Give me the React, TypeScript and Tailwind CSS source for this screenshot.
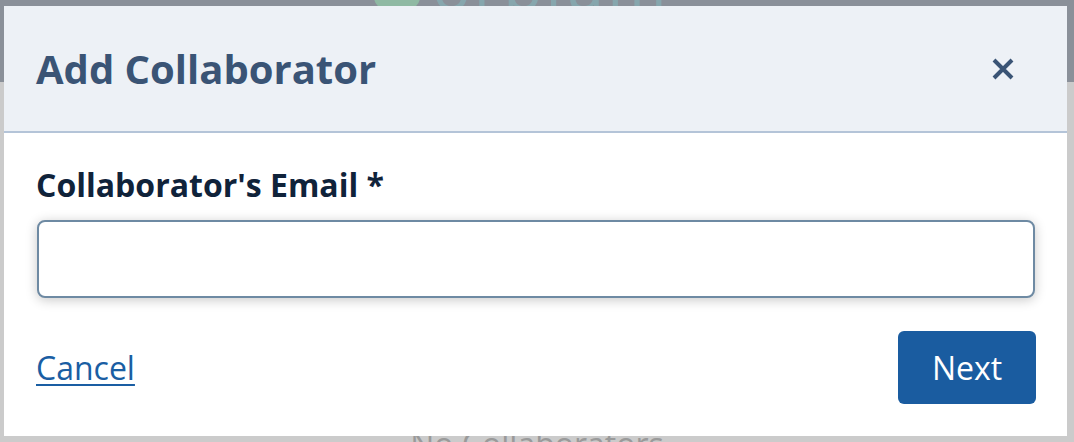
export default function App() {
  return (
    <div className="relative w-[1074px] h-[442px] overflow-hidden bg-[#cbcbcb] font-['Open_Sans',sans-serif]">
      {/* page behind the overlay */}
      <div className="h-[82px] bg-[#8a9099] flex justify-center items-start">
        <div className="flex items-center gap-3 -mt-[46px] ml-[-30px]">
          <div className="w-[46px] h-[46px] rounded-xl bg-[#8fb9a3]" />
          <span className="text-[64px] leading-none text-[#86a6ad] tracking-wider">orbium</span>
        </div>
      </div>
      <div className="absolute left-0 right-0 top-[428px] text-center text-[32px] leading-none text-[#9a9a9a]">
        No Collaborators
      </div>

      {/* modal */}
      <div className="absolute left-[4px] top-[6px] w-[1063px] h-[430px] bg-white flex flex-col">
        <div className="h-[127px] shrink-0 bg-[#edf1f6] border-b-2 border-[#b4c4d8] pl-8 pr-[53px] flex items-center justify-between">
          <h2 className="text-[40px] font-bold text-[#3a5475] leading-none">Add Collaborator</h2>
          <button className="w-[22px] h-[22px] flex items-center justify-center">
            <svg width="22" height="22" viewBox="0 0 22 22">
              <path d="M2 2 20 20M20 2 2 20" stroke="#3a5475" strokeWidth="4" strokeLinecap="butt" />
            </svg>
          </button>
        </div>

        <div className="flex-1 flex flex-col pl-8 pr-[31px] pt-[30px] pb-8">
          <label className="text-[32px] font-bold leading-[44px] text-[#10233a] mb-[13px]">
            Collaborator's Email *
          </label>
          <input
            type="email"
            className="h-[78px] w-[998px] ml-px rounded-lg border-2 border-[#6e8aa3] bg-white shadow-[0_2px_12px_rgba(0,0,0,0.22)] outline-none px-4 text-[28px]"
          />
          <div className="mt-auto flex items-center justify-between">
            <a href="#" className="text-[32px] leading-none text-[#1a5ea3] underline underline-offset-[4px] decoration-2">
              Cancel
            </a>
            <button className="w-[138px] h-[73px] rounded-md bg-[#1a5ca0] text-white text-[32px] leading-none">
              Next
            </button>
          </div>
        </div>
      </div>
    </div>
  );
}
